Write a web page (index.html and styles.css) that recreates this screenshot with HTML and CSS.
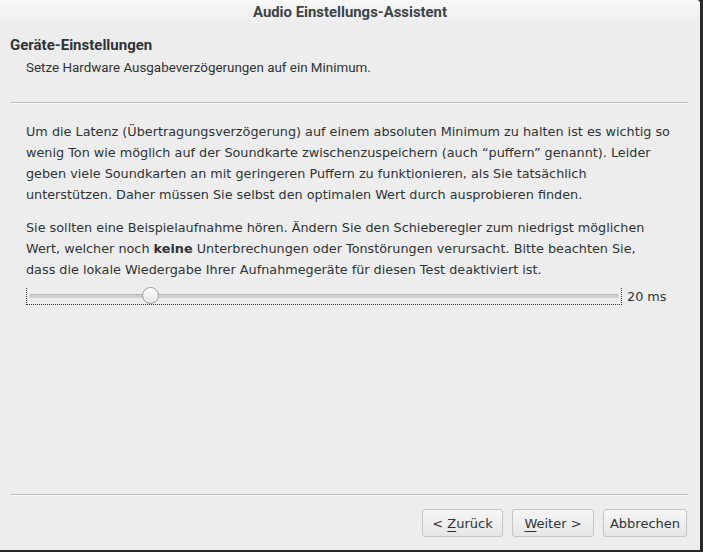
FILE: index.html
```html
<!DOCTYPE html>
<html>
<head>
<meta charset="utf-8">
<link rel="stylesheet" href="styles.css">
</head>
<body>
<div class="window">
  <div class="titlebar">Audio Einstellungs-Assistent</div>
  <div class="header">
    <div class="heading">Geräte-Einstellungen</div>
    <div class="subheading">Setze Hardware Ausgabeverzögerungen auf ein Minimum.</div>
  </div>
  <div class="sep"></div>
  <div class="content">
    <p>Um die Latenz (Übertragungsverzögerung) auf einem absoluten Minimum zu halten ist es wichtig so<br>wenig Ton wie möglich auf der Soundkarte zwischenzuspeichern (auch “puffern” genannt). Leider<br>geben viele Soundkarten an mit geringeren Puffern zu funktionieren, als Sie tatsächlich<br>unterstützen. Daher müssen Sie selbst den optimalen Wert durch ausprobieren finden.</p>
    <p>Sie sollten eine Beispielaufnahme hören. Ändern Sie den Schieberegler zum niedrigst möglichen<br>Wert, welcher noch <b>keine</b> Unterbrechungen oder Tonstörungen verursacht. Bitte beachten Sie,<br>dass die lokale Wiedergabe Ihrer Aufnahmegeräte für diesen Test deaktiviert ist.</p>
    <div class="slider-row">
      <div class="slider">
        <div class="trough"></div>
        <div class="knob"></div>
      </div>
      <div class="value">20 ms</div>
    </div>
  </div>
  <div class="spacer"></div>
  <div class="sep bottom"></div>
  <div class="buttons">
    <button class="btn b-back">&lt; <u>Z</u>urück</button>
    <button class="btn b-next"><u>W</u>eiter &gt;</button>
    <button class="btn b-cancel">Abbrechen</button>
  </div>
</div>
</body>
</html>
```
FILE: styles.css
```css
html, body {
  margin: 0;
  padding: 0;
  background: #2a2a2a;
  width: 703px;
  height: 552px;
  overflow: hidden;
}
.window {
  width: 700px;
  height: 550px;
  background: #ededed;
  display: flex;
  flex-direction: column;
  font-family: "DejaVu Sans", sans-serif;
  font-size: 12.8px;
  color: #2e3436;
  border-top-right-radius: 4px;
}
.titlebar {
  height: 24px;
  line-height: 24px;
  text-align: center;
  font-family: Roboto, "DejaVu Sans", sans-serif;
  font-weight: bold;
  font-size: 14.9px;
  color: #3b4446;
  background: linear-gradient(#f9f9f9, #ededed);
  border-top-right-radius: 4px;
}
.header {
  padding: 12px 10px 0 10px;
  height: 66px;
  font-family: Roboto, "DejaVu Sans", sans-serif;
}
.heading {
  font-weight: bold;
  font-size: 15px;
  line-height: 18px;
}
.subheading {
  margin-top: 5px;
  padding-left: 16px;
  font-size: 13.4px;
  line-height: 18px;
}
.sep {
  margin: 0 12px 0 10px;
  height: 1px;
  background: #bfbfbf;
  border-bottom: 1px solid #fafafa;
}
.content {
  padding: 17px 26px 0 26px;
}
.content p {
  margin: 0 0 12px 0;
  line-height: 21px;
  white-space: nowrap;
}
.slider-row {
  display: flex;
  align-items: center;
  margin-top: -4px;
}
.slider {
  position: relative;
  width: 596px;
  height: 17px;
  border-left: 1px dotted #333;
  border-right: 1px dotted #333;
  border-bottom: 1px dotted #333;
  box-sizing: border-box;
}
.trough {
  position: absolute;
  left: 2px;
  right: 2px;
  top: 6px;
  height: 3px;
  background: #d0d0d0;
  border-top: 1px solid #b8b8b8;
  border-radius: 2px;
}
.knob {
  position: absolute;
  left: 115px;
  top: -1px;
  width: 15px;
  height: 15px;
  border-radius: 50%;
  border: 1px solid #9a9a9a;
  background: linear-gradient(#ffffff, #e6e6e6);
}
.value {
  margin-left: 5px;
}
.spacer {
  flex: 1;
}
.sep.bottom {
  margin-bottom: 13px;
}
.buttons {
  display: flex;
  justify-content: flex-end;
  gap: 9px;
  padding: 0 13px 13px 0;
}
.btn {
  font-family: "DejaVu Sans", sans-serif;
  font-size: 13px;
  color: #2e3436;
  height: 28px;
  padding: 0;
  border: 1px solid #c4c4c4;
  border-radius: 3px;
  background: linear-gradient(#f6f6f6, #e6e6e6);
}
.b-back { width: 81px; }
.b-next { width: 82px; }
.b-cancel { width: 84px; }
.btn u {
  text-decoration-thickness: 1px;
  text-underline-offset: 3px;
}
```
